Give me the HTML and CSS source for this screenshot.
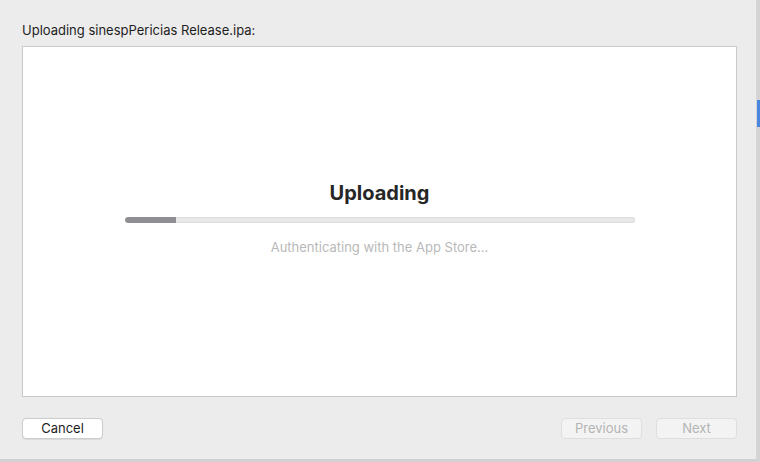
FILE: index.html
```html
<!DOCTYPE html>
<html>
<head>
<meta charset="utf-8">
<link rel="stylesheet" href="styles.css">
</head>
<body>
<div class="screen">
  <div class="sheet">
    <div class="title">Uploading sinespPericias Release.ipa:</div>
    <div class="panel">
      <div class="heading">Uploading</div>
      <div class="bar"><div class="fill" style="width:10%"></div></div>
      <div class="status">Authenticating with the App Store...</div>
    </div>
    <div class="actions">
      <button class="btn">Cancel</button>
      <div class="spacer"></div>
      <button class="btn disabled">Previous</button>
      <button class="btn disabled">Next</button>
    </div>
  </div>
  <div class="behind">
    <div class="behind-blue"></div>
  </div>
</div>
</body>
</html>
```
FILE: styles.css
```css
* { box-sizing: border-box; }
html, body { margin: 0; padding: 0; }
body {
  width: 760px;
  height: 462px;
  overflow: hidden;
  background: #d2d2d2;
  font-family: Inter, "Liberation Sans", sans-serif;
}
.screen {
  display: flex;
  height: 462px;
}
.sheet {
  width: 757px;
  height: 460px;
  background: #ececec;
  border-right: 1px solid #d6d6d6;
  border-bottom: 1px solid #d0d0d0;
  padding: 21px 19px 0 22px;
  display: flex;
  flex-direction: column;
}
.title {
  font-size: 13px;
  line-height: 18px;
  color: #1e1e1e;
  margin-bottom: 7px;
}
.panel {
  height: 351px;
  background: #ffffff;
  border: 1px solid #c9c9c9;
  display: flex;
  flex-direction: column;
  align-items: center;
  padding-top: 134px;
}
.heading {
  font-size: 20px;
  line-height: 24px;
  font-weight: 700;
  color: #262626;
}
.bar {
  margin-top: 12px;
  width: 510px;
  height: 6px;
  border-radius: 3px;
  background: #e8e8e8;
  box-shadow: inset 0 0 0 1px #dcdcdc;
  overflow: hidden;
}
.fill {
  height: 100%;
  background: #8e8e93;
  border-radius: 3px 0 0 3px;
}
.status {
  margin-top: 16px;
  font-size: 13px;
  line-height: 16px;
  color: #b9b9b9;
}
.actions {
  margin-top: 21px;
  display: flex;
  gap: 14px;
}
.spacer { flex: 1; }
.btn {
  width: 81px;
  height: 21px;
  padding: 0;
  border: 1px solid #cdcdcd;
  border-radius: 4px;
  background: #ffffff;
  box-shadow: 0 0.5px 1px rgba(0,0,0,0.08);
  font-family: Inter, "Liberation Sans", sans-serif;
  font-size: 13px;
  line-height: 19px;
  color: #1e1e1e;
}
.btn.disabled {
  background: #f3f3f3;
  border-color: #dedede;
  color: #b3b3b3;
  box-shadow: none;
}
.behind {
  flex: 1;
  background: #d4d4d4;
  padding-top: 100px;
}
.behind-blue {
  height: 27px;
  background: #4a86e0;
}
```
